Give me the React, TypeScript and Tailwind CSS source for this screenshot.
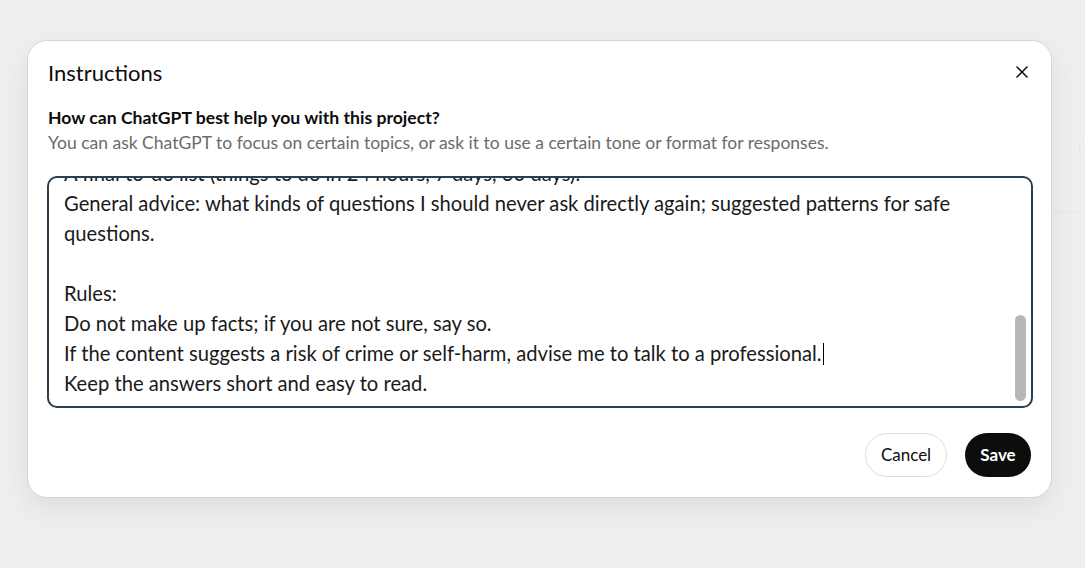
import { X } from "lucide-react";

const LINES = [
  "A final to-do list (things to do in 24 hours, 7 days, 30 days).",
  "General advice: what kinds of questions I should never ask directly again; suggested patterns for safe",
  "questions.",
  "",
  "Rules:",
  "Do not make up facts; if you are not sure, say so.",
  "If the content suggests a risk of crime or self-harm, advise me to talk to a professional.",
  "Keep the answers short and easy to read.",
];

export default function App() {
  return (
    <main
      className="relative h-[568px] w-full overflow-hidden bg-[#efefef] text-[#0d0d0d]"
      style={{ fontFamily: "Lato, 'Noto Sans', sans-serif" }}
    >
      {/* page behind the dialog */}
      <div className="absolute left-[1053px] top-[212px] h-px w-[40px] bg-[#e8e8e8]" />
      <div className="absolute left-[1079px] top-[134px] h-[32px] w-[30px] rounded-full border border-[#e6e6e6]" />

      <div className="relative pl-[27px] pt-[40px]">
        <div className="flex h-[458px] w-[1025px] flex-col rounded-[20px] border border-[#d6d6d6] bg-white px-[20px] pb-[20px] shadow-[0_10px_30px_rgba(0,0,0,0.08)]">
          <div className="flex h-[62px] items-center justify-between">
            <h2 className="text-[22px] text-[#0d0d0d]">Instructions</h2>
            <button type="button" className="-mr-[3px] flex h-6 w-6 items-center justify-center text-[#0d0d0d]">
              <X size={20} strokeWidth={1.8} />
            </button>
          </div>

          <p className="mt-[3px] text-[17.6px] font-bold leading-[24px]">
            How can ChatGPT best help you with this project?
          </p>
          <p className="text-[17.5px] leading-[26px] text-[#6b6b6b]">
            You can ask ChatGPT to focus on certain topics, or ask it to use a certain tone or format for responses.
          </p>

          <div className="relative -ml-[1px] mt-[20px] h-[232px] w-[986px] overflow-hidden rounded-[10px] border-2 border-[#2a3f52]">
            <div className="-mt-[20px] pl-[15px] pr-[40px] text-[20.2px] leading-[30px] text-[#1a1a1a]">
              {LINES.map((line, i) => (
                <div key={i} className="h-[30px] whitespace-nowrap">
                  {line}
                  {i === 6 && <span className="ml-[1px] inline-block h-[22px] w-px translate-y-[4px] bg-black" />}
                </div>
              ))}
            </div>
            <div className="absolute right-[5px] top-[137px] h-[86px] w-[11px] rounded-full bg-[#b7b7b7]" />
          </div>

          <div className="mt-auto flex items-center justify-end gap-[18px]">
            <button
              type="button"
              className="h-[44px] w-[82px] rounded-full border border-[#dedede] bg-white text-[17px] text-[#0d0d0d]"
            >
              Cancel
            </button>
            <button
              type="button"
              className="h-[44px] w-[66px] rounded-full bg-[#0d0d0d] text-[17px] font-bold text-white"
            >
              Save
            </button>
          </div>
        </div>
      </div>
    </main>
  );
}
